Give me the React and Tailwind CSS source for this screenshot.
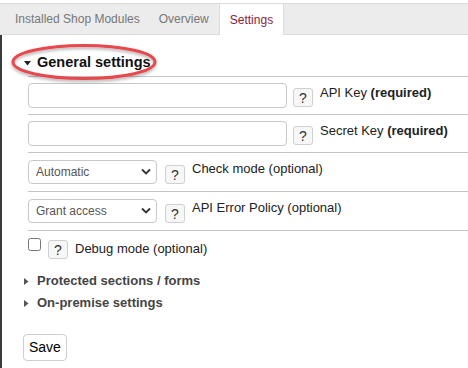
import React from "react";

const font = { fontFamily: '"Liberation Sans", Arial, sans-serif' };

function HelpButton({ className = "" }) {
  return (
    <button
      type="button"
      className={`w-[20px] h-[19px] shrink-0 border border-[#cfcfcf] rounded-[3px] bg-[#f7f7f7] text-[#333] text-[14px] leading-none flex items-end justify-center pb-[1px] ${className}`}
    >
      ?
    </button>
  );
}

function Chevron() {
  return (
    <svg width="10" height="7" viewBox="0 0 10 7" className="absolute right-[6px] top-[9px] pointer-events-none">
      <path d="M1 1.5 L5 5.5 L9 1.5" fill="none" stroke="#333" strokeWidth="1.8" />
    </svg>
  );
}

function Select({ value }) {
  return (
    <div className="relative w-[129px] h-[24px] shrink-0">
      <select
        defaultValue={value}
        className="appearance-none w-full h-full border border-[#c8c8c8] rounded-[4px] bg-white pl-[7px] text-[12px] text-[#555] outline-none"
      >
        <option>{value}</option>
      </select>
      <Chevron />
    </div>
  );
}

export default function App() {
  return (
    <div className="w-[468px] h-[368px] bg-white overflow-hidden relative text-[#222]" style={font}>
      {/* tabs */}
      <div className="mt-[3px] h-[32px] bg-[#ececec] border-t border-b border-[#dcdcdc] flex pl-[5px] text-[12px]">
        <div className="px-[10px] flex items-center text-[#777]">Installed Shop Modules</div>
        <div className="px-[9px] flex items-center text-[#777]">Overview</div>
        <div className="ml-[1px] px-[10px] flex items-center text-[#8a1c3c] bg-white border-l border-r border-[#dcdcdc] -mb-[1px] -mt-[1px] border-t">
          Settings
        </div>
      </div>

      <div className="border-l-2 border-[#3b3b3b] h-full pt-[18px]">
        {/* heading */}
        <div className="flex items-center pl-[22px] h-[20px] font-bold text-[14.5px] text-[#111]">
          <svg width="7" height="5" viewBox="0 0 7 5" className="mr-[6px]">
            <path d="M0 0 H7 L3.5 4.5 Z" fill="#222" />
          </svg>
          General settings
        </div>

        <div className="ml-[26px] mt-[3px]">
          <div className="border-t border-[#c4c4c4] pt-[6px] pb-[6px] flex items-start">
            <input className="w-[259px] h-[25px] border border-[#c8c8c8] rounded-[4px] shrink-0 outline-none" />
            <HelpButton className="ml-[6px] mt-[5px]" />
            <div className="ml-[7px] mt-[2px] text-[13px] leading-[16px] whitespace-nowrap">
              API Key <b>(required)</b>
            </div>
          </div>
          <div className="border-t border-[#c4c4c4] pt-[6px] pb-[6px] flex items-start">
            <input className="w-[259px] h-[25px] border border-[#c8c8c8] rounded-[4px] shrink-0 outline-none" />
            <HelpButton className="ml-[6px] mt-[5px]" />
            <div className="ml-[7px] mt-[2px] text-[13px] leading-[16px] whitespace-nowrap">
              Secret Key <b>(required)</b>
            </div>
          </div>
          <div className="border-t border-[#c4c4c4] pt-[6px] pb-[7px] flex items-start">
            <Select value="Automatic" />
            <HelpButton className="ml-[8px] mt-[6px]" />
            <div className="ml-[7px] mt-[2px] text-[13px] leading-[16px] whitespace-nowrap">Check mode (optional)</div>
          </div>
          <div className="border-t border-[#c4c4c4] pt-[6px] pb-[7px] flex items-start">
            <Select value="Grant access" />
            <HelpButton className="ml-[8px] mt-[6px]" />
            <div className="ml-[7px] mt-[2px] text-[13px] leading-[16px] whitespace-nowrap">API Error Policy (optional)</div>
          </div>
          <div className="border-t border-[#c4c4c4] pt-[6px] flex items-start">
            <input type="checkbox" className="w-[13px] h-[13px] mt-[1px] shrink-0" />
            <HelpButton className="ml-[7px] mt-[3px]" />
            <div className="ml-[7px] mt-[4px] text-[13px] leading-[16px] whitespace-nowrap">Debug mode (optional)</div>
          </div>
        </div>

        <div className="mt-[11px] pl-[22px] text-[13px] font-bold text-[#444]">
          <div className="flex items-center h-[22px]">
            <svg width="5" height="7" viewBox="0 0 5 7" className="mr-[8px]">
              <path d="M0 0 L4.5 3.5 L0 7 Z" fill="#555" />
            </svg>
            Protected sections / forms
          </div>
          <div className="flex items-center h-[22px]">
            <svg width="5" height="7" viewBox="0 0 5 7" className="mr-[8px]">
              <path d="M0 0 L4.5 3.5 L0 7 Z" fill="#555" />
            </svg>
            On-premise settings
          </div>
        </div>

        <div className="pl-[21px] mt-[20px]">
          <button className="h-[27px] px-[5px] border border-[#cfcfcf] rounded-[4px] bg-white text-[14px] text-black">
            Save
          </button>
        </div>
      </div>

      {/* annotation ellipse */}
      <svg width="170" height="50" className="absolute left-[0px] top-[38px] pointer-events-none">
        <defs>
          <filter id="sh" x="-10%" y="-30%" width="120%" height="160%">
            <feDropShadow dx="0" dy="2" stdDeviation="1.5" floodColor="#000" floodOpacity="0.3" />
          </filter>
        </defs>
        <ellipse cx="84" cy="24" rx="71" ry="16.5" fill="none" stroke="#e8474d" strokeWidth="3" filter="url(#sh)" />
      </svg>
    </div>
  );
}
